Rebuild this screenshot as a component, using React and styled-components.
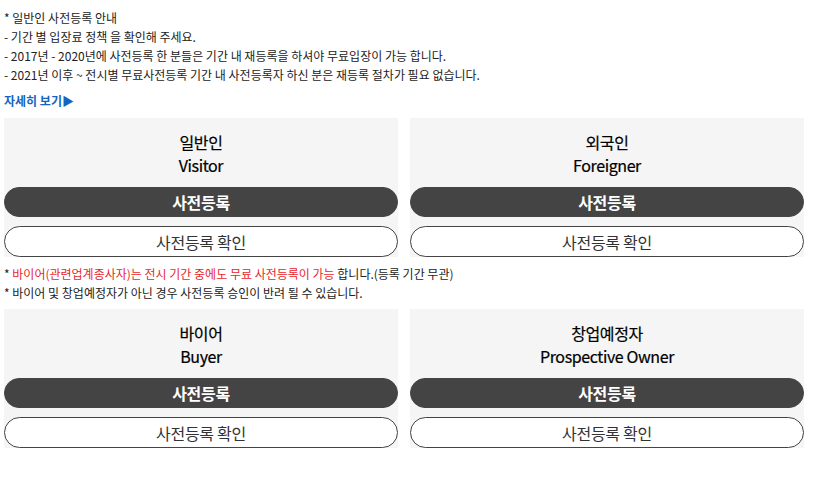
import React from "react";
import styled, { createGlobalStyle } from "styled-components";

const Global = createGlobalStyle`
  html, body { margin: 0; padding: 0; background: #fff; }
  body { font-family: "Noto Sans CJK KR", "Noto Sans", sans-serif; color: #222; }
`;

const Page = styled.div`
  width: 800px;
  padding: 8px 0 0 4px;
`;

const Notice = styled.div`
  font-size: 12px;
  line-height: 19px;
  color: #222;
  letter-spacing: 0;
  margin: ${(p) => p.$m || "0"};
`;

const Line = styled.div`
  white-space: nowrap;
`;

const Red = styled.span`
  color: #e8262b;
`;

const More = styled.a`
  display: block;
  margin-top: 7px;
  font-size: 12px;
  line-height: 19px;
  font-weight: 700;
  color: #1565c0;
  text-decoration: none;
`;

const Grid = styled.div`
  display: grid;
  grid-template-columns: 1fr 1fr;
  column-gap: 12px;
  margin-top: ${(p) => p.$mt}px;
`;

const Card = styled.div`
  background: #f5f5f5;
  display: flex;
  flex-direction: column;
`;

const Title = styled.div`
  padding: 13px 0 10px;
  text-align: center;
  font-size: 16px;
  line-height: 23px;
  font-weight: 400;
  color: #000;
  letter-spacing: -0.4px;
  -webkit-text-stroke: 0.2px #000;
`;

const Btn = styled.button`
  box-sizing: border-box;
  width: 100%;
  height: ${(p) => (p.$outline ? 31 : 30)}px;
  border-radius: 16px;
  border: 1px solid #444;
  background: ${(p) => (p.$outline ? "#fff" : "#444")};
  color: ${(p) => (p.$outline ? "#333" : "#fff")};
  font-family: "Noto Sans CJK KR", sans-serif;
  font-size: 16px;
  font-weight: ${(p) => (p.$outline ? 400 : 700)};
  letter-spacing: -0.3px;
  padding: 0;
  margin-top: ${(p) => (p.$outline ? 9 : 0)}px;
  cursor: pointer;
`;

function RegCard({ ko, en }) {
  return (
    <Card>
      <Title>
        <div>{ko}</div>
        <div>{en}</div>
      </Title>
      <Btn>사전등록</Btn>
      <Btn $outline>사전등록 확인</Btn>
    </Card>
  );
}

export default function App() {
  return (
    <>
      <Global />
      <Page>
        <Notice>
          <Line>* 일반인 사전등록 안내</Line>
          <Line>- 기간 별 입장료 정책 을 확인해 주세요.</Line>
          <Line>- 2017년 - 2020년에 사전등록 한 분들은 기간 내 재등록을 하셔야 무료입장이 가능 합니다.</Line>
          <Line>- 2021년 이후 ~ 전시별 무료사전등록 기간 내 사전등록자 하신 분은 재등록 절차가 필요 없습니다.</Line>
        </Notice>
        <More href="#">자세히 보기▶</More>
        <Grid $mt={8}>
          <RegCard ko="일반인" en="Visitor" />
          <RegCard ko="외국인" en="Foreigner" />
        </Grid>
        <Notice $m="7px 0 0">
          <Line>
            * <Red>바이어(관련업계종사자)는 전시 기간 중에도 무료 사전등록이 가능</Red> 합니다.(등록 기간 무관)
          </Line>
          <Line>* 바이어 및 창업예정자가 아닌 경우 사전등록 승인이 반려 될 수 있습니다.</Line>
        </Notice>
        <Grid $mt={7}>
          <RegCard ko="바이어" en="Buyer" />
          <RegCard ko="창업예정자" en="Prospective Owner" />
        </Grid>
      </Page>
    </>
  );
}
